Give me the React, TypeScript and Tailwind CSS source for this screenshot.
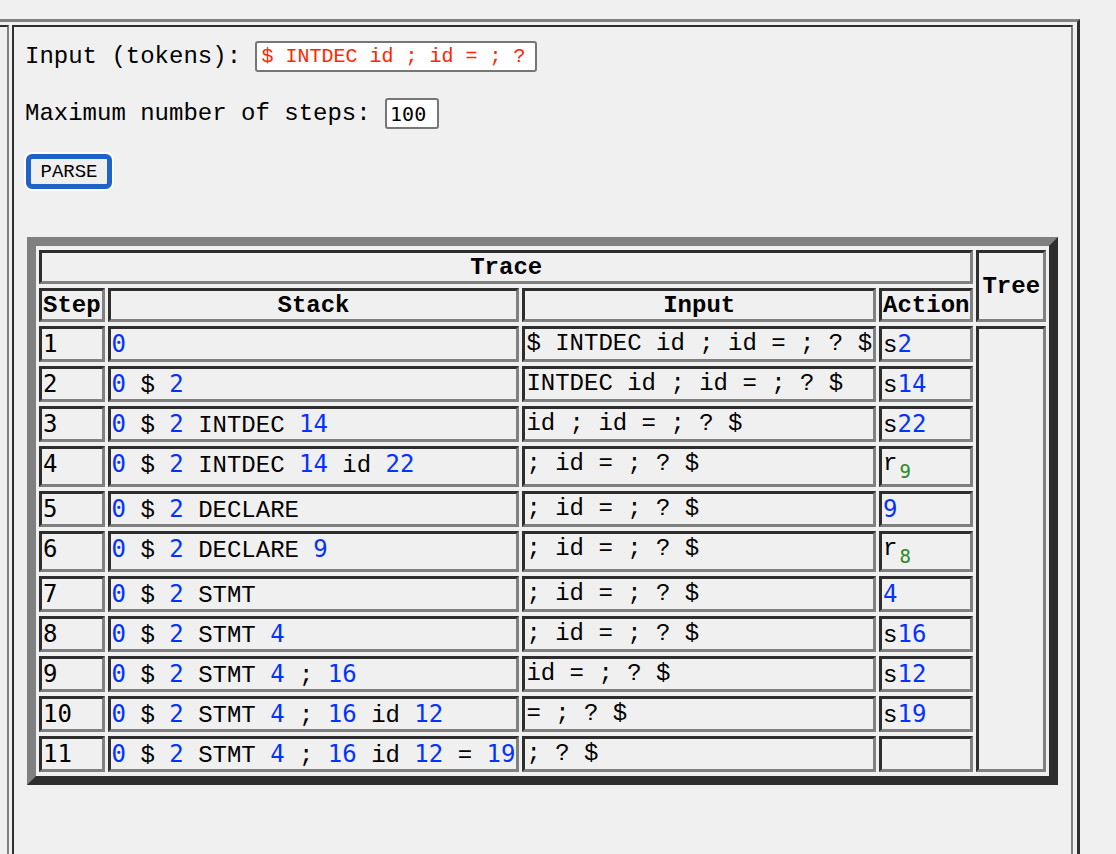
import React from 'react';

const mono = "font-['Liberation_Mono','Courier_New',monospace]";

interface RowType {
  step: string;
  stack: string;
  input: string;
  action: string;
}

const rows: RowType[] = [
  { step: '1', stack: '0', input: '$ INTDEC id ; id = ; ? $', action: 's2' },
  { step: '2', stack: '0 $ 2', input: 'INTDEC id ; id = ; ? $', action: 's14' },
  { step: '3', stack: '0 $ 2 INTDEC 14', input: 'id ; id = ; ? $', action: 's22' },
  { step: '4', stack: '0 $ 2 INTDEC 14 id 22', input: '; id = ; ? $', action: 'r9' },
  { step: '5', stack: '0 $ 2 DECLARE', input: '; id = ; ? $', action: '9' },
  { step: '6', stack: '0 $ 2 DECLARE 9', input: '; id = ; ? $', action: 'r8' },
  { step: '7', stack: '0 $ 2 STMT', input: '; id = ; ? $', action: '4' },
  { step: '8', stack: '0 $ 2 STMT 4', input: '; id = ; ? $', action: 's16' },
  { step: '9', stack: '0 $ 2 STMT 4 ; 16', input: 'id = ; ? $', action: 's12' },
  { step: '10', stack: '0 $ 2 STMT 4 ; 16 id 12', input: '= ; ? $', action: 's19' },
  { step: '11', stack: '0 $ 2 STMT 4 ; 16 id 12 = 19', input: '; ? $', action: '' },
];

// digits come out in a sans mono face in the reference
const Txt: React.FC<{ text: string; blue?: boolean }> = ({ text, blue }) => (
  <>
    {text.split(/(\d+)/).map((part, i) =>
      /^\d+$/.test(part) ? (
        <span
          key={i}
          className={blue ? "font-['DejaVu_Sans_Mono',monospace] text-[#0433ff]" : "font-['DejaVu_Sans_Mono',monospace]"}
        >
          {part}
        </span>
      ) : (
        <span key={i}>{part}</span>
      )
    )}
  </>
);

const Action: React.FC<{ action: string }> = ({ action }) => {
  if (action.startsWith('r')) {
    return (
      <>
        r
        <span className="font-['DejaVu_Sans_Mono',monospace] text-[19px] text-[#2a8a22] align-[-8px] ml-[2px]">
          {action.slice(1)}
        </span>
      </>
    );
  }
  if (action.startsWith('s')) {
    return (
      <>
        s<Txt text={action.slice(1)} blue />
      </>
    );
  }
  return <Txt text={action} blue />;
};

const cell =
  'border-[3px] border-t-[#2e2e2e] border-l-[#2e2e2e] border-b-[#808080] border-r-[#808080] px-[1px] pt-[2px] pb-0 leading-[26px] whitespace-pre';

const App: React.FC = () => {
  return (
    <div className={`h-screen w-full overflow-hidden bg-[#f0f0f0] text-black ${mono}`}>
      {/* outer frame, its left side lies off screen */}
      <div className="mt-[19px] ml-[-20px] w-[1100px] border-t-[3px] border-l-[3px] border-r-[3px] border-t-[#808080] border-l-[#808080] border-r-[#2e2e2e] pt-[3px] pl-[3px] pr-[4px] flex gap-[3px]">
        <div className="w-[23px] h-[900px] border-t-2 border-l-2 border-r-2 border-t-[#2e2e2e] border-l-[#2e2e2e] border-r-[#808080]" />

        <div className="flex-1 h-[900px] border-t-2 border-l-2 border-r-2 border-t-[#2e2e2e] border-l-[#2e2e2e] border-r-[#808080] pl-[11px] pt-[14px]">
          {/* Form */}
          <div className="flex items-center h-[31px] text-[24px] leading-[27px]">
            <span className="whitespace-pre">Input (tokens): </span>
            <input
              readOnly
              value="$ INTDEC id ; id = ; ?"
              className={`w-[282px] h-[31px] border-2 border-[#767676] rounded-[3px] bg-white px-[4px] text-[20px] text-[#ff2600] outline-none ${mono}`}
            />
          </div>

          <div className="flex items-center h-[31px] mt-[26px] text-[24px] leading-[27px]">
            <span className="whitespace-pre">Maximum number of steps: </span>
            <input
              readOnly
              value="100"
              className="w-[54px] h-[31px] border-2 border-[#767676] rounded-[3px] bg-white px-[3px] text-[20px] outline-none font-['DejaVu_Sans_Mono',monospace]"
            />
          </div>

          <div className="mt-[25px] h-[35px]">
            <button className="h-[35px] w-[86px] ml-[1px] rounded-[6px] border-[5px] border-[#2063c8] bg-[#efefef] text-[19px] leading-[20px] shadow-[0_0_0_2px_white]">
              PARSE
            </button>
          </div>

          {/* Trace table */}
          <table className="mt-[48px] ml-[2px] border-separate border-spacing-x-[3px] border-spacing-y-[4px] border-[9px] border-t-[#808080] border-l-[#808080] border-b-[#2e2e2e] border-r-[#2e2e2e] text-[24px]">
            <tbody>
              <tr>
                <th colSpan={4} className={`${cell} font-bold text-center`}>
                  Trace
                </th>
                <th rowSpan={2} className={`${cell} font-bold text-center px-[3px]`}>
                  Tree
                </th>
              </tr>
              <tr>
                <th className={`${cell} font-bold text-center`}>Step</th>
                <th className={`${cell} font-bold text-center`}>Stack</th>
                <th className={`${cell} font-bold text-center`}>Input</th>
                <th className={`${cell} font-bold text-center`}>Action</th>
              </tr>
              {rows.map((row, i) => (
                <tr key={row.step}>
                  <td className={`${cell} align-top`}>
                    <Txt text={row.step} />
                  </td>
                  <td className={`${cell} align-top`}>
                    <Txt text={row.stack} blue />
                  </td>
                  <td className={`${cell} align-top`}>{row.input}</td>
                  <td className={`${cell} align-top`}>
                    <Action action={row.action} />
                  </td>
                  {i === 0 && <td rowSpan={11} className={cell} />}
                </tr>
              ))}
            </tbody>
          </table>
        </div>
      </div>
    </div>
  );
};

export default App;
